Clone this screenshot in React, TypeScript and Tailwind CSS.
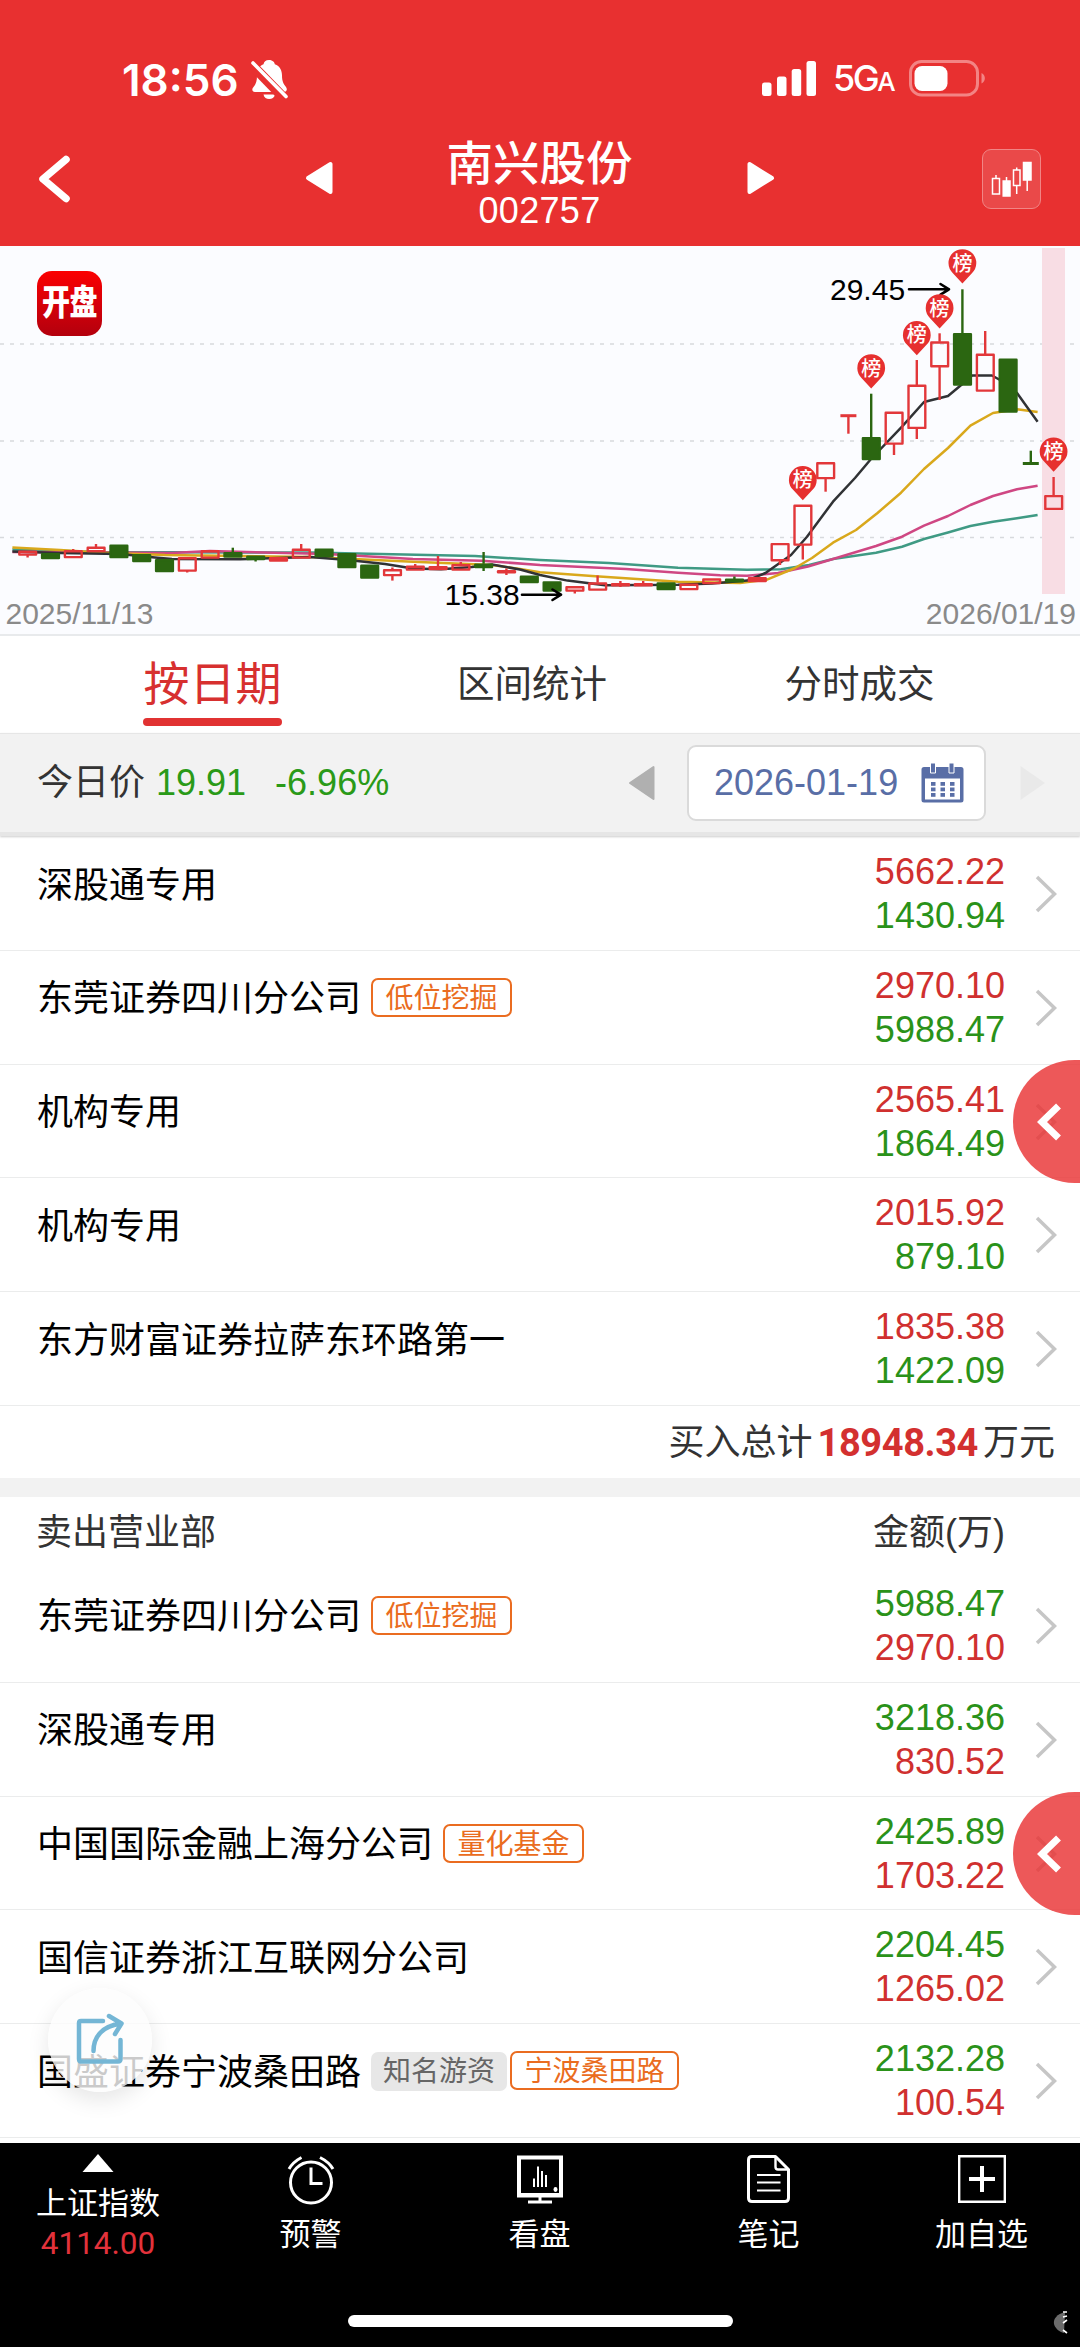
import React from 'react';

type Tone = 'orange' | 'gray';

interface Tag {
  label: string;
  tone: Tone;
}

interface Seat {
  name: string;
  buy: string;
  sell: string;
  tags?: Tag[];
}

interface Candle {
  up: boolean;
  top: number;
  bottom: number;
  high?: number;
  low?: number;
  filled?: boolean;
}

const RED = '#e2373a';
const GREEN = '#2b6611';

const buyers: Seat[] = [
  { name: '深股通专用', buy: '5662.22', sell: '1430.94' },
  { name: '东莞证券四川分公司', buy: '2970.10', sell: '5988.47', tags: [{ label: '低位挖掘', tone: 'orange' }] },
  { name: '机构专用', buy: '2565.41', sell: '1864.49' },
  { name: '机构专用', buy: '2015.92', sell: '879.10' },
  { name: '东方财富证券拉萨东环路第一', buy: '1835.38', sell: '1422.09' },
];

const sellers: Seat[] = [
  { name: '东莞证券四川分公司', sell: '5988.47', buy: '2970.10', tags: [{ label: '低位挖掘', tone: 'orange' }] },
  { name: '深股通专用', sell: '3218.36', buy: '830.52' },
  { name: '中国国际金融上海分公司', sell: '2425.89', buy: '1703.22', tags: [{ label: '量化基金', tone: 'orange' }] },
  { name: '国信证券浙江互联网分公司', sell: '2204.45', buy: '1265.02' },
  {
    name: '国盛证券宁波桑田路',
    sell: '2132.28',
    buy: '100.54',
    tags: [
      { label: '知名游资', tone: 'gray' },
      { label: '宁波桑田路', tone: 'orange' },
    ],
  },
];

const candles: Candle[] = [
  { up: true, top: 551, bottom: 555, low: 557.5 },
  { up: false, top: 553.5, bottom: 558.5 },
  { up: true, top: 550.5, bottom: 557.5, high: 549 },
  { up: true, top: 547, bottom: 551.5, high: 544 },
  { up: false, top: 545, bottom: 557.5 },
  { up: false, top: 554.5, bottom: 561.5 },
  { up: false, top: 559.5, bottom: 571.5 },
  { up: true, top: 557.5, bottom: 571, low: 572.5 },
  { up: true, top: 550.5, bottom: 558 },
  { up: false, top: 552.5, bottom: 557, high: 547.7 },
  { up: false, top: 556, bottom: 559.5, low: 561.5 },
  { up: true, top: 557.5, bottom: 561 },
  { up: true, top: 549, bottom: 558, high: 544 },
  { up: false, top: 549, bottom: 556.5 },
  { up: false, top: 553.5, bottom: 567.5 },
  { up: false, top: 565, bottom: 578 },
  { up: true, top: 569.5, bottom: 575.5, high: 567.5, low: 580.6 },
  { up: true, top: 566, bottom: 570, high: 564 },
  { up: true, top: 566.5, bottom: 569.5, high: 556 },
  { up: true, top: 564.5, bottom: 570, high: 562 },
  { up: false, top: 563.8, bottom: 567.5, high: 552, low: 571 },
  { up: true, top: 570.5, bottom: 572.5, high: 568.5, low: 575 },
  { up: false, top: 576, bottom: 582.5 },
  { up: false, top: 581.7, bottom: 591 },
  { up: true, top: 586.5, bottom: 591, low: 593.5 },
  { up: true, top: 582.7, bottom: 590, high: 575.5 },
  { up: true, top: 583.5, bottom: 585.2, high: 581, low: 587 },
  { up: true, top: 583.5, bottom: 585.2, high: 581 },
  { up: false, top: 582.7, bottom: 589.5 },
  { up: true, top: 584, bottom: 589.5 },
  { up: true, top: 578.7, bottom: 583.5 },
  { up: false, top: 579, bottom: 581.7, high: 576.5 },
  { up: true, top: 577.5, bottom: 581.5, filled: true },
  { up: true, top: 543.3, bottom: 560.7, low: 565 },
  { up: true, top: 505, bottom: 545, low: 559.5 },
  { up: true, top: 462.5, bottom: 478.5, low: 491.7 },
  { up: true, top: 415.7, bottom: 415.7, low: 433.7 },
  { up: false, top: 437.5, bottom: 459.5, high: 393.7 },
  { up: true, top: 412, bottom: 444, low: 455 },
  { up: true, top: 385, bottom: 428.3, high: 360, low: 439 },
  { up: true, top: 341.7, bottom: 366.7, high: 333.3, low: 400 },
  { up: false, top: 333.5, bottom: 385, high: 289.3 },
  { up: true, top: 354, bottom: 391, high: 331 },
  { up: false, top: 359, bottom: 412 },
  { up: false, top: 463.5, bottom: 463.5, high: 450.7 },
  { up: true, top: 495.3, bottom: 509.3, high: 477 },
];

// candle index -> top of the badge above it
const pins = [
  { index: 34, top: 465.8 },
  { index: 37, top: 354 },
  { index: 39, top: 320.8 },
  { index: 40, top: 294 },
  { index: 41, top: 249 },
  { index: 45, top: 437.3 },
];

const candleX = (i: number) => 27.6 + 22.8 * i;

const averages = [
  {
    color: '#3f9a84',
    points:
      '12.4,549.5 100,552 240,552.5 310,552.5 475,556 540,560 609,563 678,567.7 747,569.7 781,569.3 809,565 833,559 876,552.7 902,546.7 924,539 948,532.5 970.4,526 993,521.7 1017,518.3 1037.6,515',
  },
  {
    color: '#cf4783',
    points:
      '12.4,552 100,552.5 172,553 210,551 327,554 413,559 482,560.7 540,565 626,569 678,572.7 720,575.2 747,575.7 778,573 808,566.5 833,559 876,546 902,536.7 924,525.7 948,516 970.4,505 993,496 1017,489.3 1037.6,485.7',
  },
  {
    color: '#d9a81c',
    points:
      '12.4,547.5 60,550 103,552.7 165,555 310,557 413,561.7 492,565 520,569 540,572.3 592,576 678,581.7 740,583 767,579.7 795,568 812,558 833,542.7 856,530 877.5,513 901,492.7 924,469 948,448 970.4,425.7 993,413 1017,409.3 1037.6,412',
  },
  {
    color: '#303235',
    points:
      '12.4,551.5 60,553 120,554 155,557.5 172,559 240,559.3 310,557 348,560 385,564 413,568.5 441,569.3 472,567 492,564.5 520,569.5 540,575 567.5,580.6 605,585.3 678,584.7 712,583.5 747,580.6 765.5,573 791,555 807,536.7 833,501.7 855,478 871,459 902,426.7 924,402 948,396 963,383.5 972,375.5 992,375.5 1000,380 1017,393 1037.6,421.7',
  },
];

const CandleMark = ({ candle, index }: { candle: Candle; index: number }) => {
  const x = candleX(index);
  const { up, top, bottom, high, low, filled } = candle;
  const color = up ? RED : GREEN;

  return (
    <g stroke={color} strokeWidth="2.4" strokeLinejoin="round">
      {high !== undefined && <line x1={x} x2={x} y1={high} y2={top} />}
      {low !== undefined && <line x1={x} x2={x} y1={bottom} y2={low} />}
      {top === bottom ? (
        <line x1={x - 8} x2={x + 8} y1={top} y2={top} strokeWidth="3" />
      ) : (
        <rect
          x={x - 8.3}
          y={top + 0.8}
          width="16.8"
          height={Math.max(bottom - top - 1.2, 1)}
          fill={!up || filled ? color : 'none'}
        />
      )}
    </g>
  );
};

const KLineChart = () => (
  <div className="relative h-[390px] border-b-2 border-[#e8eaec] bg-[#fbfcff]">
    <svg viewBox="0 246 1080 388" className="block h-[388px] w-full">
      {[344, 441, 537.5].map((y) => (
        <line key={y} x1="0" x2="1080" y1={y} y2={y} stroke="#d7d9dd" strokeWidth="1.4" strokeDasharray="4 6" />
      ))}
      <rect x="1042" y="248" width="23" height="346" fill="#f8dde4" />
      {averages.map((line) => (
        <polyline key={line.color} points={line.points} fill="none" stroke={line.color} strokeWidth="2.5" strokeLinejoin="round" />
      ))}
      {candles.map((candle, i) => (
        <CandleMark key={i} candle={candle} index={i} />
      ))}

      <g fontFamily='"Liberation Sans", Arial, sans-serif' fontSize="30">
        <text x="444.5" y="605">15.38</text>
        <text x="830" y="300">29.45</text>
        <text x="5.5" y="624" fill="#8a8a8a">2025/11/13</text>
        <text x="1076" y="624" fill="#8a8a8a" textAnchor="end">2026/01/19</text>
      </g>
      <g fill="none" stroke="#000" strokeWidth="2.6" strokeLinecap="round" strokeLinejoin="round">
        <path d="M522 594.7H561M552.5 589.5L561 594.7L552.5 600" />
        <path d="M909 289.3H949M940.5 284L949 289.3L940.5 294.6" />
      </g>

      {pins.map(({ index, top }) => {
        const x = candleX(index);
        return (
          <g key={index}>
            <path
              d={`M${x} ${top + 34.5}L${x - 9.5} ${top + 24.2}A13.9 13.9 0 1 1 ${x + 9.5} ${top + 24.2}Z`}
              fill="#e6302f"
            />
            <text
              x={x}
              y={top + 21.5}
              fill="#fff"
              fontSize="20"
              fontWeight="500"
              textAnchor="middle"
              fontFamily='"Noto Sans CJK SC", sans-serif'
            >
              榜
            </text>
          </g>
        );
      })}
    </svg>

    <div className="absolute left-[37px] top-[25px] flex h-[65px] w-[65px] items-center justify-center rounded-[15px] bg-gradient-to-b from-[#fb0000] to-[#b3000d]">
      <span className="scale-y-125 text-[28px] leading-none font-black tracking-[-0.5px] text-white">开盘</span>
    </div>
  </div>
);

const StatusBar = () => (
  <div className="flex h-[134px] items-end justify-between pr-[94px] pb-[34px] pl-[122px] text-white">
    <div className="flex items-center">
      <span className="font-[Inter] text-[44px] leading-[38px] font-semibold">18:56</span>
      <svg width="37" height="41" viewBox="0 0 37 41" className="ml-[12px]">
        <path
          d="M18 1C22 1 23.5 3.5 23.8 5.2C29 7 31 11.500 31 16.500C31 23 33 25.500 35 28C36.500 30 36 33 33 33H4C1 33 .5 30 2.500 28C5 25 6 22 6 16.500C6 11 8 7 12.500 5.200C13 3 14.500 1 18 1Z"
          fill="currentColor"
        />
        <path d="M12.500 35.500H24C23.500 38.500 21 40 18.200 40S13 38.500 12.500 35.500Z" fill="currentColor" />
        <path d="M-1 4L34 40" stroke="#e83030" strokeWidth="10" />
        <path d="M2 4L35 37.500" stroke="currentColor" strokeWidth="3.6" strokeLinecap="round" />
      </svg>
    </div>
    <div className="flex items-center">
      <svg width="55" height="35" viewBox="0 0 55 35" fill="currentColor">
        <rect x="0" y="21.500" width="9.500" height="13.500" rx="2.500" />
        <rect x="15" y="15.500" width="9.500" height="19.500" rx="2.500" />
        <rect x="29.700" y="8" width="9.500" height="27" rx="2.500" />
        <rect x="44.500" y="0" width="9.500" height="35" rx="2.500" />
      </svg>
      <div className="ml-[16px] flex w-[61px] items-baseline pt-[3px] font-[Inter] leading-[36px] font-medium">
        <span className="text-[36px] tracking-[-2.5px]">5G</span>
        <span className="text-[26px]">A</span>
      </div>
      <svg width="77" height="37" viewBox="0 0 77 37" className="ml-[15px]">
        <rect x="1.500" y="1.500" width="67" height="33.500" rx="11" fill="none" stroke="#f38484" strokeWidth="3" />
        <rect x="5.500" y="6" width="33" height="25" rx="7.500" fill="#fff" />
        <path d="M72.500 13C77 15 77 21.500 72.500 23.500Z" fill="#f38484" />
      </svg>
    </div>
  </div>
);

const TitleBar = () => (
  <div className="flex h-[112px] items-start justify-between pr-[39px] pl-[38px] text-white">
    <div className="w-[59px] pt-[20px]">
      <svg width="33" height="50" viewBox="0 0 33 50">
        <path d="M28 5.500L5 25L28 44.500" fill="none" stroke="currentColor" strokeWidth="7.500" strokeLinecap="round" strokeLinejoin="round" />
      </svg>
    </div>
    <div className="flex w-[470px] justify-between">
      <svg width="28" height="34" viewBox="0 0 28 34" className="mt-[27px]">
        <path d="M25.500 3V31L3 17Z" fill="currentColor" stroke="currentColor" strokeWidth="4" strokeLinejoin="round" />
      </svg>
      <div className="flex flex-col items-center">
        <h1 className="mt-[4px] text-[46.5px] leading-[52px] font-medium">南兴股份</h1>
        <span className="mt-[2px] text-[36px] leading-[38px] tracking-[0.3px]">002757</span>
      </div>
      <svg width="28" height="34" viewBox="0 0 28 34" className="mt-[27px]">
        <path d="M2.500 3V31L25 17Z" fill="currentColor" stroke="currentColor" strokeWidth="4" strokeLinejoin="round" />
      </svg>
    </div>
    <div className="mt-[15px] flex h-[60px] w-[59px] items-center justify-center rounded-[9px] border-[1.5px] border-[#f18585] bg-white/12">
      <svg width="42" height="38" viewBox="0 0 42 38" fill="none" stroke="currentColor" strokeWidth="1.500">
        <path d="M1.500 18.500H8.500V34H1.500ZM5 15V18.500" />
        <path d="M12.200 21H19V36H12.200ZM15.500 17V21" fill="currentColor" />
        <path d="M22.500 10H29V25.500H22.500ZM25.700 7.500V10M25.700 25.500V34" />
        <path d="M32.500 2.500H40V20H32.500ZM36.200 20V31" fill="currentColor" />
      </svg>
    </div>
  </div>
);

const Tabs = () => (
  <div className="relative flex h-[97px] text-[37.5px] leading-[44px] text-[#333]">
    <div className="flex w-[425px] flex-col items-center">
      <span className="mt-[22px] text-[46px] leading-[52px] text-[#d7302f]">按日期</span>
      <span className="mt-[8px] h-[8px] w-[139px] rounded-full bg-[#e13232]" />
    </div>
    <div className="w-[214px] pt-[26px] text-center whitespace-nowrap">区间统计</div>
    <div className="w-[441px] pt-[26px] text-center">分时成交</div>
  </div>
);

const CalendarIcon = () => (
  <svg width="43" height="40" viewBox="0 0 43 40" fill="#596ea6">
    <path d="M3 4H40Q42.500 4 42.500 6.500V37Q42.500 39.500 40 39.500H3Q.5 39.500 .5 37V6.500Q.5 4 3 4ZM4 15.500V36.500H39V15.500Z" fillRule="evenodd" />
    <path d="M9.500 0H14.500V10H9.500ZM28 0H33V10H28Z" stroke="#fff" strokeWidth="1" />
    {[19, 24.5, 30].map((y) =>
      [10, 19.500, 29].map((x) => <rect key={`${x}-${y}`} x={x} y={y} width="4.500" height="3.800" />),
    )}
  </svg>
);

const PriceBar = () => (
  <div className="relative z-10 mb-px flex h-[103px] items-center justify-between border-t-[1.5px] border-b-[4px] border-t-[#e6e6e6] border-b-[#e6e6e6] bg-[#f2f2f2] pr-[34px] pl-[37px] text-[36px] shadow-[0_1px_2px_rgba(0,0,0,0.2)]">
    <div className="flex items-baseline text-[#2a9a18]">
      <span className="text-[#333]">今日价</span>
      <span className="ml-[11px]">19.91</span>
      <span className="ml-[29px]">-6.96%</span>
    </div>
    <div className="flex items-center">
      <svg width="27" height="36" viewBox="0 0 27 36">
        <path d="M25.500 2V34L2 18Z" fill="#b0b0b0" stroke="#b0b0b0" strokeWidth="2" strokeLinejoin="round" />
      </svg>
      <div className="ml-[32px] flex h-[76px] w-[299px] items-center rounded-[9px] border-[2.5px] border-[#dadada] bg-white pl-[25px]">
        <span className="w-[185px] text-[#596ea6]">2026-01-19</span>
        <span className="ml-[22px]">
          <CalendarIcon />
        </span>
      </div>
      <svg width="27" height="36" viewBox="0 0 27 36" className="ml-[33px]">
        <path d="M1.500 1V35L26 18Z" fill="#e9e9e9" />
      </svg>
    </div>
  </div>
);

const TagBadge = ({ tag }: { tag: Tag }) =>
  tag.tone === 'orange' ? (
    <span className="flex h-[39px] items-center rounded-[7px] border-[2.5px] border-[#ea6c20] px-[12.5px] pt-[3px] text-[28px] leading-none text-[#ea6c20]">
      {tag.label}
    </span>
  ) : (
    <span className="mr-[3px] flex h-[39px] translate-y-[1px] items-center rounded-[7px] bg-[#e7e7e7] px-[12px] text-[28px] leading-none text-[#666]">
      {tag.label}
    </span>
  );

const SeatRow = ({ seat, side }: { seat: Seat; side: 'buy' | 'sell' }) => {
  const buyAmount = <span key="buy" className="text-[#d0302f]">{seat.buy}</span>;
  const sellAmount = <span key="sell" className="text-[#2a9219]">{seat.sell}</span>;

  return (
    <div className="flex h-[113.8px] border-b-[1.5px] border-[#ebecec] pr-[23px] pl-[37px]">
      <div className="flex h-[93px] flex-1 items-center">
        <span className="mr-[10px] pt-[4px] text-[36px] leading-none text-black">{seat.name}</span>
        {seat.tags?.map((tag) => <TagBadge key={tag.label} tag={tag} />)}
      </div>
      <div className="flex flex-col items-end pt-[13px] text-[36px] leading-[44px]">
        {side === 'buy' ? [buyAmount, sellAmount] : [sellAmount, buyAmount]}
      </div>
      <svg width="22" height="38" viewBox="0 0 22 38" className="mt-[38px] ml-[30px]">
        <path d="M2 2L19.500 19L2 36" fill="none" stroke="#c6c6c6" strokeWidth="3.500" />
      </svg>
    </div>
  );
};

// half-hidden drawer handle on the right edge
const SideHandle = ({ className }: { className: string }) => (
  <div className={`absolute right-0 z-20 flex h-[123px] w-[67px] items-center overflow-hidden rounded-l-[62px] bg-[#e93334]/82 pl-[24px] ${className}`}>
    <svg width="25" height="38" viewBox="0 0 25 38">
      <path d="M21.500 3L5 19L21.500 35" fill="none" stroke="#fff" strokeWidth="7" />
    </svg>
  </div>
);

const ShareButton = () => (
  <button className="absolute top-[1988px] left-[48px] z-20 flex h-[104px] w-[104px] items-center justify-center rounded-full bg-[#fcfcfc]/80 shadow-[0_8px_22px_rgba(0,0,0,0.1)]">
    <svg width="50" height="52" viewBox="0 0 50 52" fill="none" stroke="#74b6d5" strokeWidth="4.500" strokeLinecap="round" strokeLinejoin="round" className="-mt-[3px]">
      <path d="M28 8H6Q4 8 4 10V46Q4 48.500 6 48.500H43Q45.500 48.500 45.500 46V27" />
      <path d="M18.500 38C18.500 24 27 13 46 10.500M34 3L46.500 10.500L40 21" />
    </svg>
  </button>
);

const navItems = [
  {
    label: '预警',
    icon: (
      <svg width="48" height="50" viewBox="0 0 48 50" fill="none" stroke="currentColor" strokeWidth="3">
        <circle cx="24" cy="27.500" r="20.500" />
        <path d="M24 12.500V28.500H35.500M2 14Q6 7 14.500 2.500M33 2.500Q42 7 46 14" />
      </svg>
    ),
  },
  {
    label: '看盘',
    icon: (
      <svg width="46" height="49" viewBox="0 0 46 49" fill="none" stroke="currentColor">
        <path d="M2 2.500H44V40H2Z" strokeWidth="4" />
        <path d="M0 40.500H46" strokeWidth="4" />
        <path d="M23 41V47M11 47H35" strokeWidth="3" />
        <path d="M17 32V23.500M21 32V11.500M25 32V16M29 32V20" strokeWidth="2" />
        <ellipse cx="38.500" cy="34.500" rx="2" ry="2.400" fill="currentColor" stroke="none" />
      </svg>
    ),
  },
  {
    label: '笔记',
    icon: (
      <svg width="43" height="48" viewBox="0 0 43 48" fill="none" stroke="currentColor" strokeWidth="3" strokeLinejoin="round">
        <path d="M5 1.500H28.500L41.500 14.500V43Q41.500 46.500 38 46.500H5Q1.500 46.500 1.500 43V5Q1.500 1.500 5 1.500Z" />
        <path d="M28.500 2V12Q28.500 14.500 31 14.500H41" strokeWidth="2.400" />
        <path d="M10 20H33.500M10 27.500H33.500M10 35.500H33.500" strokeWidth="2.200" />
      </svg>
    ),
  },
  {
    label: '加自选',
    icon: (
      <svg width="48" height="48" viewBox="0 0 48 48" fill="none" stroke="currentColor">
        <path d="M1.200 1.200H46.800V46.800H1.200Z" strokeWidth="2.400" />
        <path d="M24 11V37M11 24H37" strokeWidth="4" />
      </svg>
    ),
  },
];

const BottomNav = () => (
  <nav className="absolute inset-x-0 bottom-0 z-10 h-[204px] bg-black text-white">
    <div className="grid h-[166px] grid-cols-[196px_229px_229px_229px_197px]">
      <div className="flex flex-col items-center pt-[11px]">
        <svg width="32" height="18" viewBox="0 0 32 18">
          <path d="M16 0L31.500 18H.5Z" fill="currentColor" />
        </svg>
        <span className="mt-[12px] text-[31px] leading-[40px]">上证指数</span>
        <span className="mt-[1px] font-[Roboto] text-[31.5px] leading-[38px] text-[#e3323b]">4114.00</span>
      </div>
      {navItems.map((item) => (
        <div key={item.label} className="flex flex-col items-center pt-[12px]">
          <div className="h-[50px]">{item.icon}</div>
          <span className="mt-[10px] text-[31px] leading-[40px]">{item.label}</span>
        </div>
      ))}
    </div>
    <div className="mx-auto mt-[6px] h-[12px] w-[385px] rounded-full bg-white" />
    <svg width="18" height="26" viewBox="0 0 18 26" className="absolute right-[9px] bottom-[11px]">
      <path d="M12 2C4 4 0 9 1 14C2 18 6 22 11 23Z" fill="#6b6b6b" />
      <path d="M10 2H14M10 7L14 6M10 13L14 10M10 20L14 23" stroke="#fff" strokeWidth="1.600" />
    </svg>
  </nav>
);

export default function App() {
  return (
    <div className="relative h-[2347px] w-[1080px] overflow-hidden bg-white font-['Liberation_Sans','Noto_Sans_CJK_SC',sans-serif]">
      <header className="h-[246px] bg-[#e83030]">
        <StatusBar />
        <TitleBar />
      </header>
      <KLineChart />
      <Tabs />
      <PriceBar />

      <section>
        {buyers.map((seat, i) => (
          <SeatRow key={i} seat={seat} side="buy" />
        ))}
        <div className="flex h-[72px] items-center justify-end pt-[3px] pr-[25px] text-[36px] text-[#333]">
          <span>买入总计</span>
          <span className="mx-[5px] font-[Roboto] text-[38px] font-bold tracking-[-0.4px] text-[#d3302f]">18948.34</span>
          <span>万元</span>
        </div>
      </section>

      <section className="border-t-[19px] border-[#f2f2f2]">
        <div className="flex h-[72px] items-center justify-between pr-[75px] pl-[36px] text-[36px] leading-none text-[#333]">
          <span>卖出营业部</span>
          <span>金额(万)</span>
        </div>
        {sellers.map((seat, i) => (
          <SeatRow key={i} seat={seat} side="sell" />
        ))}
      </section>

      <SideHandle className="top-[1060px]" />
      <SideHandle className="top-[1792px]" />
      <ShareButton />
      <BottomNav />
    </div>
  );
}
